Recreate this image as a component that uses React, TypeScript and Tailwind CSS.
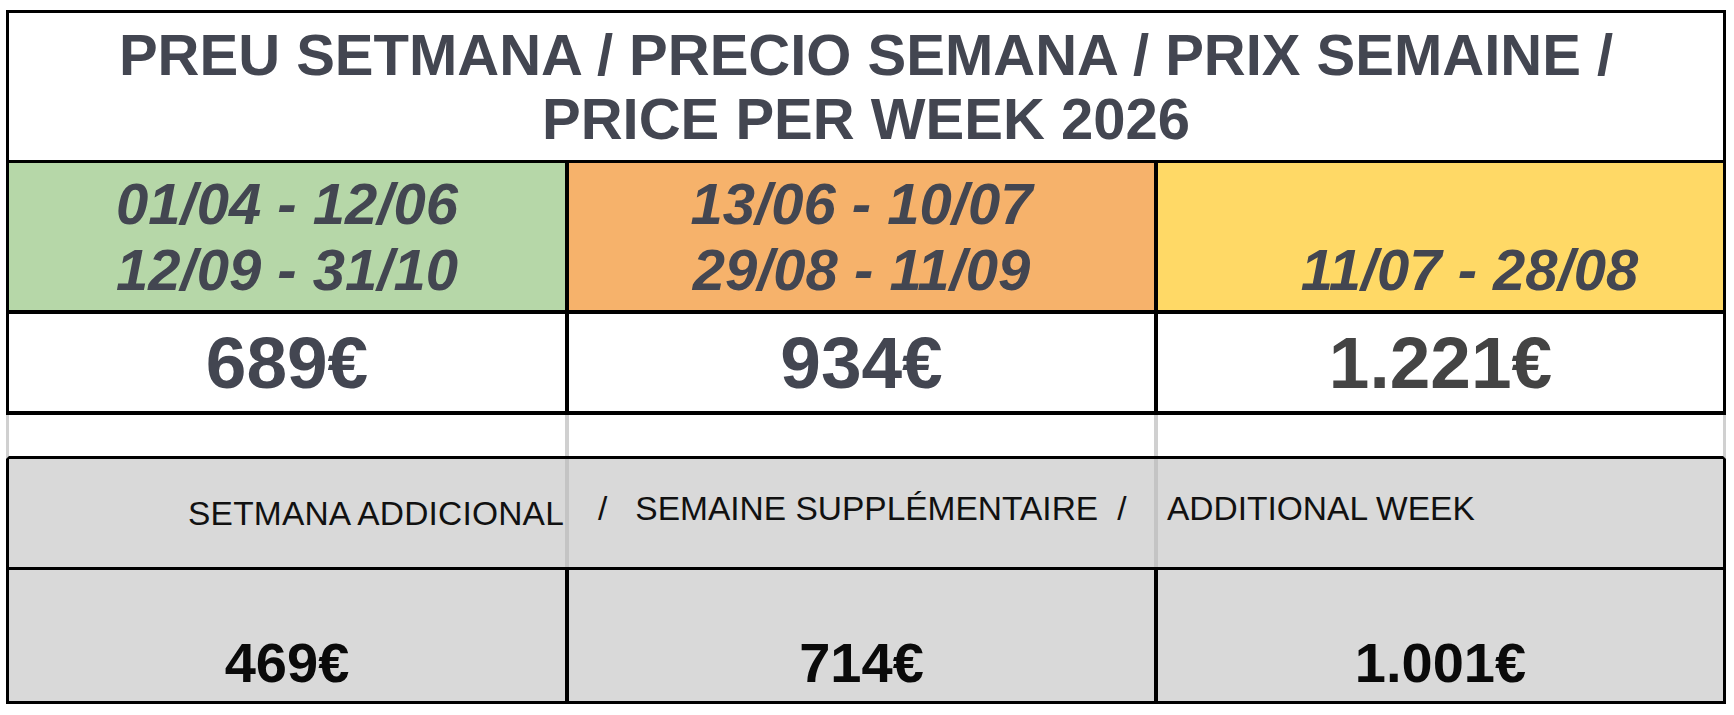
import React from 'react';

const dark = 'text-[#434651]';

const App: React.FC = () => {
  return (
    <div className="min-h-[715px] w-[1734px] bg-white pl-[6px] pt-[10px] font-['Liberation_Sans',Arial,sans-serif]">
      <div className="w-[1720px]">
        {/* title */}
        <div className={`flex h-[153px] items-center justify-center border-[3px] border-black text-center text-[58px] font-bold leading-[64px] ${dark}`}>
          <h1>
            PREU SETMANA / PRECIO SEMANA / PRIX SEMAINE /
            <br />
            PRICE PER WEEK 2026
          </h1>
        </div>

        {/* seasons */}
        <div className={`flex h-[151px] border-x-[3px] border-b-4 border-black text-[58px] font-bold italic leading-[66px] ${dark}`}>
          <div className="flex w-[556px] flex-col items-center justify-center bg-[#b6d7a8]">
            <span>01/04 - 12/06</span>
            <span>12/09 - 31/10</span>
          </div>
          <div className="flex w-[589px] flex-col items-center justify-center border-l-4 border-black bg-[#f6b26b]">
            <span>13/06 - 10/07</span>
            <span>29/08 - 11/09</span>
          </div>
          <div className="flex flex-1 flex-col items-center justify-center border-l-4 border-black bg-[#ffd966] pl-[58px]">
            <span>&nbsp;</span>
            <span>11/07 - 28/08</span>
          </div>
        </div>

        {/* weekly prices */}
        <div className="flex h-[101px] border-x-[3px] border-b-4 border-black text-[73px] font-bold leading-none">
          <div className={`flex w-[556px] items-center justify-center ${dark}`}>689€</div>
          <div className={`flex w-[589px] items-center justify-center border-l-4 border-black ${dark}`}>934€</div>
          <div className="flex flex-1 items-center justify-center border-l-4 border-black text-[#444444]">1.221€</div>
        </div>

        {/* spacer row */}
        <div className="flex h-[44px] border-x-[3px] border-b-[3px] border-x-[#d0d0d0] border-b-black">
          <div className="w-[556px]" />
          <div className="w-[589px] border-l-4 border-[#d0d0d0]" />
          <div className="flex-1 border-l-4 border-[#d0d0d0]" />
        </div>

        {/* additional week label */}
        <div className="flex h-[111px] border-x-[3px] border-b-[3px] border-black bg-[#d9d9d9] text-[33.5px] leading-normal text-[#111111]">
          <div className="flex w-[556px] items-center justify-end pt-[2px] pr-[1px]">
            <span className="tracking-[0.2px]">SETMANA ADDICIONAL</span>
          </div>
          <div className="flex w-[589px] items-center border-l-4 border-[#c4c4c4] pb-[8px]">
            <span className="ml-[29px]">/</span>
            <span className="ml-[28px]">SEMAINE SUPPLÉMENTAIRE</span>
            <span className="ml-[19px]">/</span>
          </div>
          <div className="flex flex-1 items-center border-l-4 border-[#c4c4c4] pb-[8px] pl-[9px]">
            <span>ADDITIONAL WEEK</span>
          </div>
        </div>

        {/* additional week prices */}
        <div className="flex h-[134px] border-x-[3px] border-b-[3px] border-black bg-[#d9d9d9] text-[56px] font-bold leading-[56px] text-[#0a0a0a]">
          <div className="flex w-[556px] items-end justify-center pb-[10px]">469€</div>
          <div className="flex w-[589px] items-end justify-center border-l-4 border-black pb-[10px]">714€</div>
          <div className="flex flex-1 items-end justify-center border-l-4 border-black pb-[10px]">1.001€</div>
        </div>
      </div>
    </div>
  );
};

export default App;
